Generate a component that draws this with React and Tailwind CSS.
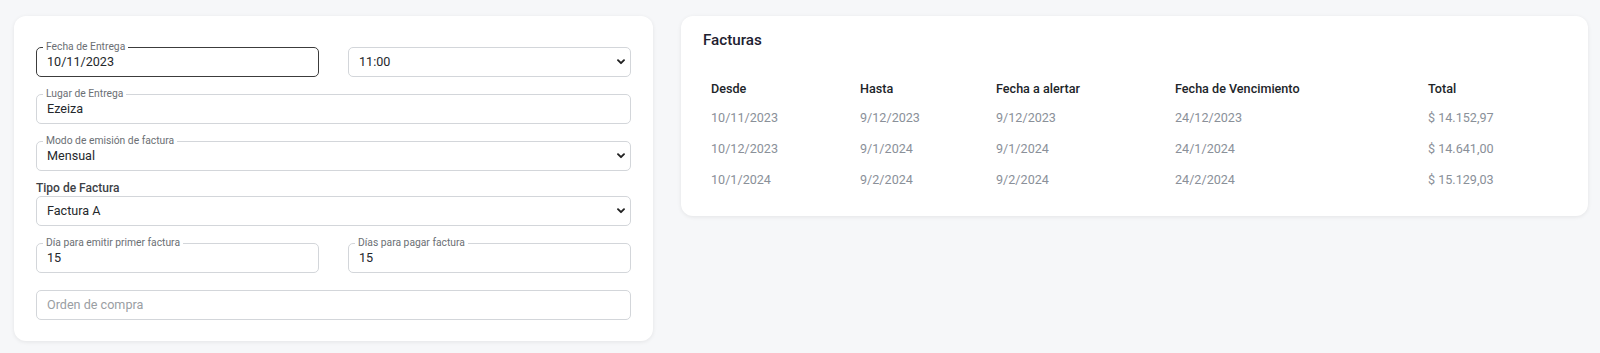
import React from "react";

function Chevron() {
  return (
    <svg
      className="pointer-events-none absolute right-[6px] top-1/2 -translate-y-1/2"
      width="8"
      height="6"
      viewBox="0 0 8 6"
      fill="none"
    >
      <path d="M1 1.2L4 4.2L7 1.2" stroke="#222" strokeWidth="1.9" strokeLinecap="round" strokeLinejoin="round" />
    </svg>
  );
}

function Outlined({ label, value, dark = false, select = false, className = "" }) {
  return (
    <div className={"relative " + className}>
      <div
        className={
          "flex h-[30px] items-center rounded-[5px] border bg-white pl-[10px] pr-[20px] text-[12.6px] text-[#25282c] " +
          (dark ? "border-[#3c3c3c]" : "border-[#d3d6da]")
        }
      >
        {value}
      </div>
      {label && (
        <span className="absolute left-[7px] top-[-6px] bg-white px-[3px] text-[10.3px] leading-[12px] text-[#6b6f74]">
          {label}
        </span>
      )}
      {select && <Chevron />}
    </div>
  );
}

const rows = [
  ["10/11/2023", "9/12/2023", "9/12/2023", "24/12/2023", "$ 14.152,97"],
  ["10/12/2023", "9/1/2024", "9/1/2024", "24/1/2024", "$ 14.641,00"],
  ["10/1/2024", "9/2/2024", "9/2/2024", "24/2/2024", "$ 15.129,03"],
];

const headers = ["Desde", "Hasta", "Fecha a alertar", "Fecha de Vencimiento", "Total"];

export default function App() {
  return (
    <div
      className="flex h-[353px] items-start gap-[28px] bg-[#f6f7f9] pl-[14px] pr-[12px] pt-[16px]"
      style={{ fontFamily: "Roboto, 'Noto Sans', sans-serif" }}
    >
      <div className="w-[639px] shrink-0 rounded-[12px] bg-white px-[22px] pb-[21px] pt-[31px] shadow-[0_1px_4px_rgba(0,0,0,0.08)]">
        <div className="grid grid-cols-2 gap-[29px]">
          <Outlined label="Fecha de Entrega" value="10/11/2023" dark />
          <Outlined value="11:00" select />
        </div>
        <Outlined className="mt-[17px]" label="Lugar de Entrega" value="Ezeiza" />
        <Outlined className="mt-[17px]" label="Modo de emisión de factura" value="Mensual" select />
        <div className="mt-[10px] text-[12px] font-medium leading-[15px] text-[#3d4146]">Tipo de Factura</div>
        <Outlined value="Factura A" select />
        <div className="mt-[17px] grid grid-cols-2 gap-[29px]">
          <Outlined label="Día para emitir primer factura" value="15" />
          <Outlined label="Días para pagar factura" value="15" />
        </div>
        <Outlined
          className="mt-[17px]"
          value={<span className="text-[#9a9ea3]">Orden de compra</span>}
        />
      </div>

      <div className="flex-1 rounded-[12px] bg-white pb-[20px] pl-[22px] pr-[22px] pt-[12px] shadow-[0_1px_4px_rgba(0,0,0,0.08)]">
        <div className="text-[15.2px] font-medium leading-[24px] text-[#1e2130]">Facturas</div>
        <div className="mt-[23px] grid grid-cols-[149px_136px_179px_253px_1fr]">
          {headers.map((h) => (
            <div key={h} className="flex h-[28px] items-center px-[8px] text-[12.6px] font-medium text-[#212529]">
              {h}
            </div>
          ))}
          {rows.map((r, i) =>
            r.map((c, j) => (
              <div key={i + "-" + j} className="flex h-[31px] items-center px-[8px] text-[12.6px] text-[#8a9099]">
                {c}
              </div>
            ))
          )}
        </div>
      </div>
    </div>
  );
}
